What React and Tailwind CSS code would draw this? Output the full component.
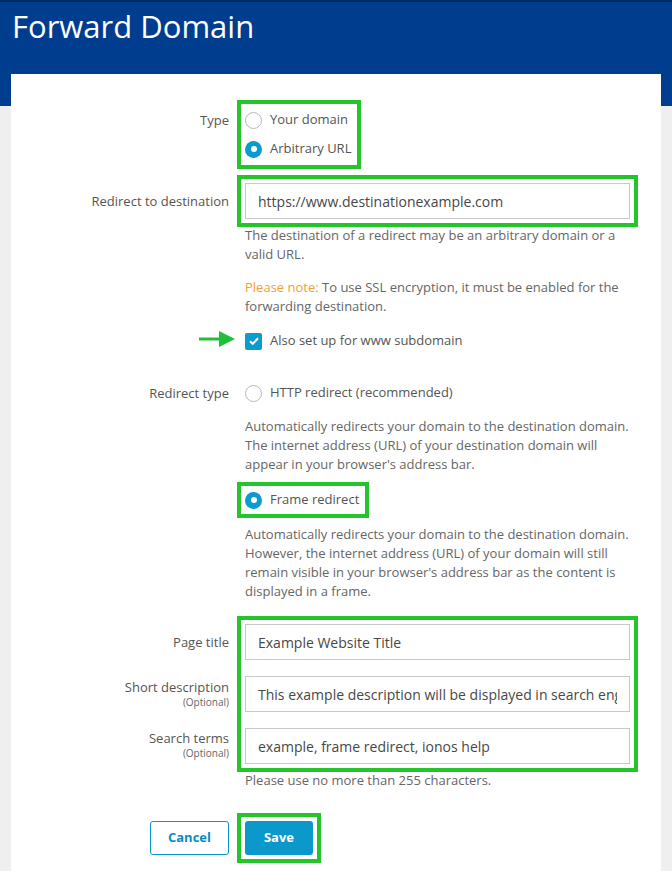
import React from 'react';

const Radio = ({ checked, label }) => (
  <div className="flex items-center gap-[8px] h-[24px]">
    {checked ? (
      <span className="w-[17px] h-[17px] rounded-full bg-[#0a9bd0] flex items-center justify-center shrink-0">
        <span className="w-[6px] h-[6px] rounded-full bg-white" />
      </span>
    ) : (
      <span className="w-[17px] h-[17px] rounded-full border border-[#b8b8b8] bg-white shrink-0" />
    )}
    <span className="text-[13px] text-[#555]">{label}</span>
  </div>
);

const Field = ({ value }) => (
  <input
    readOnly
    value={value}
    className="block w-[385px] h-[36px] border border-[#c8c8c8] bg-white px-[12px] text-[14px] text-[#474747] outline-none font-['Open_Sans',sans-serif]"
  />
);

const highlight = 'outline-[4px] outline-solid outline-[#24c42b] outline-offset-[4px]';

const App = () => {
  return (
    <div className="min-h-[871px] bg-[#efefef] font-['Open_Sans',sans-serif]">
      <div className="h-[106px] bg-[#003d8f] border-t-[2px] border-[#002a66]">
        <h1 className="pl-[12px] pt-[2px] text-[31px] leading-[44px] text-white">Forward Domain</h1>
      </div>

      <div className="bg-white mx-[11px] -mt-[32px] pt-[34px] pb-[20px] min-h-[797px]">
        {/* Type */}
        <div className="flex">
          <div className="w-[218px] text-right text-[13px] leading-[24px] text-[#555]">Type</div>
          <div className="ml-[16px]">
            <div className={`inline-flex flex-col gap-[5px] pr-[2px] ${highlight}`}>
              <Radio label="Your domain" />
              <Radio checked label="Arbitrary URL" />
            </div>
          </div>
        </div>

        {/* Redirect to destination */}
        <div className="flex mt-[22px]">
          <div className="w-[218px] text-right text-[13px] leading-[36px] text-[#555]">Redirect to destination</div>
          <div className="ml-[16px] w-[385px]">
            <div className={highlight}>
              <Field value="https://www.destinationexample.com" />
            </div>
            <p className="mt-[7px] text-[13px] leading-[19px] text-[#666]">
              The destination of a redirect may be an arbitrary domain or a valid URL.
            </p>
            <p className="mt-[14px] text-[13px] leading-[19px] text-[#666]">
              <span className="text-[#f59d38]">Please note: </span>To use SSL encryption, it must be enabled for the forwarding destination.
            </p>
            <div className="relative mt-[15px] flex items-center gap-[8px] h-[20px]">
              <svg className="absolute left-[-46px] top-[-1px]" width="37" height="18" viewBox="0 0 37 18">
                <line x1="0" y1="9" x2="22" y2="9" stroke="#1fbf3a" strokeWidth="3" />
                <polygon points="20,1 36,9 20,17" fill="#1fbf3a" />
              </svg>
              <span className="w-[17px] h-[17px] rounded-[2px] bg-[#0a9bd0] flex items-center justify-center shrink-0">
                <svg width="10" height="8" viewBox="0 0 10 8">
                  <path d="M1 4.2 L3.8 6.8 L9 1.2" fill="none" stroke="white" strokeWidth="2" />
                </svg>
              </span>
              <span className="text-[13px] text-[#555]">Also set up for www subdomain</span>
            </div>
          </div>
        </div>

        {/* Redirect type */}
        <div className="flex mt-[32px]">
          <div className="w-[218px] text-right text-[13px] leading-[20px] text-[#555]">Redirect type</div>
          <div className="ml-[16px] w-[385px]">
            <div className="h-[20px] flex items-center">
              <Radio label="HTTP redirect (recommended)" />
            </div>
            <p className="mt-[14px] text-[13px] leading-[19px] text-[#666]">
              Automatically redirects your domain to the destination domain. The internet address (URL) of your destination domain will appear in your browser's address bar.
            </p>
            <div className={`mt-[16px] inline-flex h-[20px] items-center pr-[2px] ${highlight}`}>
              <Radio checked label="Frame redirect" />
            </div>
            <p className="mt-[15px] text-[13px] leading-[19px] text-[#666]">
              Automatically redirects your domain to the destination domain. However, the internet address (URL) of your domain will still remain visible in your browser's address bar as the content is displayed in a frame.
            </p>
          </div>
        </div>

        {/* Page meta */}
        <div className="flex mt-[23px]">
          <div className="w-[218px] flex flex-col gap-[16px] text-right text-[#555]">
            <div className="h-[36px] text-[13px] leading-[36px]">Page title</div>
            <div className="h-[36px] pt-[2px]">
              <div className="text-[13px] leading-[18px]">Short description</div>
              <div className="text-[10px] leading-[13px] text-[#666]">(Optional)</div>
            </div>
            <div className="h-[36px] pt-[1px]">
              <div className="text-[13px] leading-[18px]">Search terms</div>
              <div className="text-[10px] leading-[13px] text-[#666]">(Optional)</div>
            </div>
          </div>
          <div className="ml-[16px] w-[385px]">
            <div className={`flex flex-col gap-[16px] ${highlight}`}>
              <Field value="Example Website Title" />
              <Field value="This example description will be displayed in search engine results." />
              <Field value="example, frame redirect, ionos help" />
            </div>
            <p className="mt-[7px] text-[13px] leading-[19px] text-[#666]">Please use no more than 255 characters.</p>
          </div>
        </div>

        {/* Buttons */}
        <div className="flex mt-[31px]">
          <div className="w-[218px] flex justify-end">
            <button className="w-[79px] h-[34px] rounded-[3px] border border-[#0b96c8] bg-white text-[13px] font-bold text-[#0b8cc3]">
              Cancel
            </button>
          </div>
          <div className="ml-[16px]">
            <div className={`w-[68px] h-[34px] ${highlight}`}>
              <button className="w-[68px] h-[34px] rounded-[3px] bg-[#0b99cb] text-[13px] font-bold text-white">
                Save
              </button>
            </div>
          </div>
        </div>
      </div>
    </div>
  );
};

export default App;
